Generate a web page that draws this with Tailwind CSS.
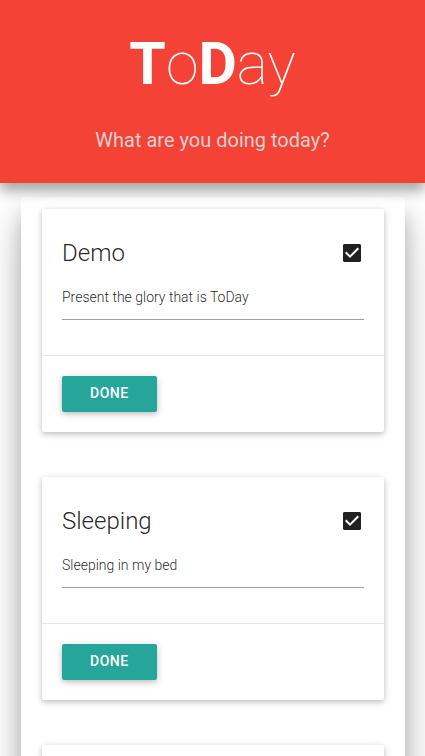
<!DOCTYPE html>
<html lang="en">
<head>
<meta charset="utf-8">
<meta name="viewport" content="width=device-width, initial-scale=1">
<title>ToDay</title>
<script src="https://cdn.jsdelivr.net/npm/@tailwindcss/browser@4"></script>
</head>
<body class="h-screen overflow-hidden bg-white font-['Roboto',sans-serif] text-black/87">
<header class="relative z-10 bg-[#f44336] pt-8 pb-[27px] text-center shadow-[0_8px_12px_0_rgba(0,0,0,0.22),0_6px_14px_0_rgba(0,0,0,0.18)]">
  <h1 class="text-[59px] leading-[64px] font-thin text-white"><b class="font-bold">T</b>o<b class="font-bold">D</b>ay</h1>
  <p class="mt-[29px] text-xl leading-[31px] text-[#d6d0cf]">What are you doing today?</p>
</header>
<main class="relative mt-[14px] mr-5 ml-[21px] flex flex-col gap-[45px] bg-white px-[21px] pt-3 pb-11 shadow-[0_18px_20px_0_rgba(0,0,0,0.26),0_27px_50px_0_rgba(0,0,0,0.16)]">
  <article class="rounded-xs bg-white shadow-[0_2px_5px_0_rgba(0,0,0,0.16),0_2px_10px_0_rgba(0,0,0,0.12)]">
    <div class="px-5 pt-5 pb-[35px]">
      <div class="flex items-center justify-between">
        <h2 class="text-2xl leading-[48px] font-light">Demo</h2>
        <label class="grid size-6 place-items-center">
          <input type="checkbox" checked aria-label="Demo" class="peer col-start-1 row-start-1 size-[18px] appearance-none rounded-xs border-2 border-[#212121]">
          <svg viewBox="0 0 24 24" class="pointer-events-none invisible col-start-1 row-start-1 size-6 fill-[#212121] peer-checked:visible" aria-hidden="true"><path d="M19 3H5c-1.11 0-2 .9-2 2v14c0 1.1.89 2 2 2h14c1.11 0 2-.9 2-2V5c0-1.1-.89-2-2-2zm-9 14l-5-5 1.41-1.41L10 14.17l7.59-7.59L19 8l-9 9z"/></svg>
        </label>
      </div>
      <input type="text" aria-label="Demo details" value="Present the glory that is ToDay" class="block h-[43px] w-full border-b border-[#9e9e9e] bg-transparent pb-[3px] text-sm font-light outline-none">
    </div>
    <div class="border-t border-black/10 p-5">
      <button type="button" class="block h-9 rounded-xs bg-[#26a69a] px-7 pb-0.5 text-sm font-medium tracking-[0.5px] text-white shadow-[0_2px_5px_0_rgba(0,0,0,0.16),0_2px_10px_0_rgba(0,0,0,0.12)]">DONE</button>
    </div>
  </article>
  <article class="rounded-xs bg-white shadow-[0_2px_5px_0_rgba(0,0,0,0.16),0_2px_10px_0_rgba(0,0,0,0.12)]">
    <div class="px-5 pt-5 pb-[35px]">
      <div class="flex items-center justify-between">
        <h2 class="text-2xl leading-[48px] font-light">Sleeping</h2>
        <label class="grid size-6 place-items-center">
          <input type="checkbox" checked aria-label="Sleeping" class="peer col-start-1 row-start-1 size-[18px] appearance-none rounded-xs border-2 border-[#212121]">
          <svg viewBox="0 0 24 24" class="pointer-events-none invisible col-start-1 row-start-1 size-6 fill-[#212121] peer-checked:visible" aria-hidden="true"><path d="M19 3H5c-1.11 0-2 .9-2 2v14c0 1.1.89 2 2 2h14c1.11 0 2-.9 2-2V5c0-1.1-.89-2-2-2zm-9 14l-5-5 1.41-1.41L10 14.17l7.59-7.59L19 8l-9 9z"/></svg>
        </label>
      </div>
      <input type="text" aria-label="Sleeping details" value="Sleeping in my bed" class="block h-[43px] w-full border-b border-[#9e9e9e] bg-transparent pb-[3px] text-sm font-light outline-none">
    </div>
    <div class="border-t border-black/10 p-5">
      <button type="button" class="block h-9 rounded-xs bg-[#26a69a] px-7 pb-0.5 text-sm font-medium tracking-[0.5px] text-white shadow-[0_2px_5px_0_rgba(0,0,0,0.16),0_2px_10px_0_rgba(0,0,0,0.12)]">DONE</button>
    </div>
  </article>
  <article class="min-h-56 rounded-xs bg-white shadow-[0_2px_5px_0_rgba(0,0,0,0.16),0_2px_10px_0_rgba(0,0,0,0.12)]"></article>
</main>
</body>
</html>
